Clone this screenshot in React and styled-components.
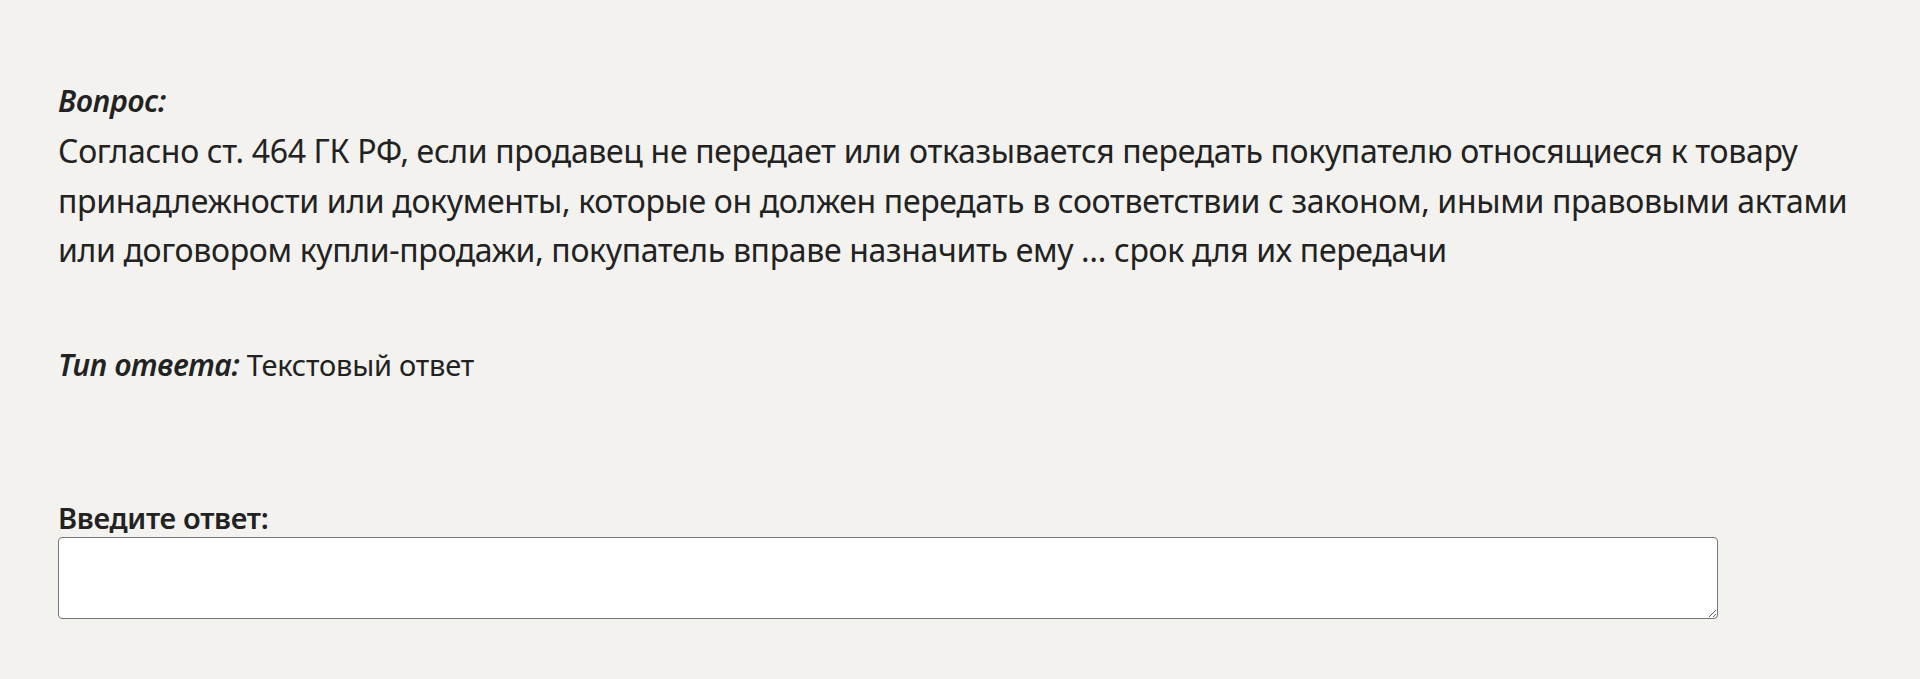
import styled, { createGlobalStyle } from 'styled-components';

const GlobalStyle = createGlobalStyle`
  html, body {
    margin: 0;
    padding: 0;
    background: #f3f2ef;
  }
  body {
    font-family: "Noto Sans", "Open Sans", sans-serif;
    color: #222222;
  }
`;

const Page = styled.div`
  padding: 78px 58px 40px;
`;

const Label = styled.div`
  font-size: 30px;
  line-height: 45px;
  font-style: italic;
  font-weight: 600;
  letter-spacing: -0.2px;
`;

const Question = styled.p`
  margin: 3px 0 0;
  font-size: 32px;
  line-height: 49.6px;
  letter-spacing: -0.34px;
  white-space: nowrap;
`;

const TypeRow = styled.div`
  margin-top: 67px;
  font-size: 29px;
  line-height: 45px;
  letter-spacing: -0.2px;
`;

const TypeName = styled.span`
  font-size: 30px;
  font-style: italic;
  font-weight: 600;
  letter-spacing: -0.3px;
`;

const AnswerLabel = styled.label`
  display: block;
  margin-top: 112px;
  font-size: 29px;
  line-height: 38px;
  font-weight: 600;
  letter-spacing: -0.3px;
`;

const Answer = styled.textarea`
  display: block;
  box-sizing: border-box;
  width: 1660px;
  height: 82px;
  margin: 0;
  padding: 6px 10px;
  background: #ffffff;
  border: 1px solid #767676;
  border-radius: 4px;
  font-family: inherit;
  font-size: 28px;
  color: #222222;
  outline: none;
`;

export default function App() {
  return (
    <>
      <GlobalStyle />
      <Page>
        <Label>Вопрос:</Label>
        <Question>
          Согласно ст. 464 ГК РФ, если продавец не передает или отказывается передать покупателю относящиеся к товару
          <br />
          принадлежности или документы, которые он должен передать в соответствии с законом, иными правовыми актами
          <br />
          или договором купли-продажи, покупатель вправе назначить ему … срок для их передачи
        </Question>
        <TypeRow>
          <TypeName>Тип ответа:</TypeName> Текстовый ответ
        </TypeRow>
        <AnswerLabel htmlFor="answer">Введите ответ:</AnswerLabel>
        <Answer id="answer" />
      </Page>
    </>
  );
}
